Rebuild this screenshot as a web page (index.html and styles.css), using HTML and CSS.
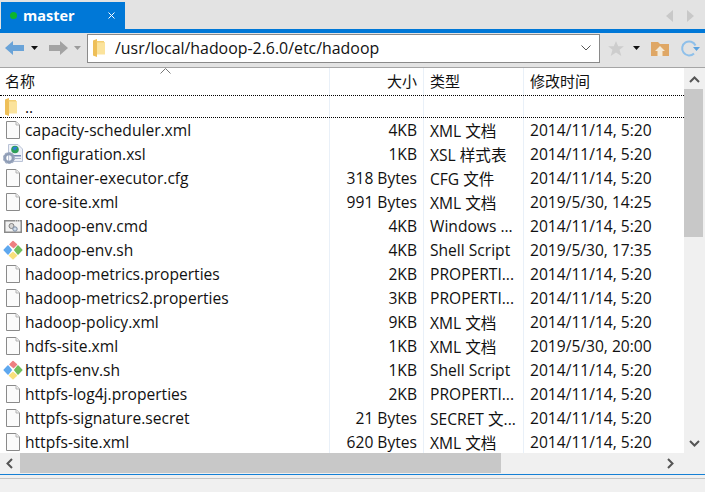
FILE: index.html
```html
<!DOCTYPE html>
<html lang="zh">
<head>
<meta charset="utf-8">
<title>master</title>
<link rel="stylesheet" href="styles.css">
</head>
<body>
<svg class="defs" width="0" height="0">
  <defs>
    <symbol id="doc" viewBox="0 0 16 20"><path d="M1.500 1.500H11L14.500 5V18.500H1.500Z" fill="#fbfbfb" stroke="#8a8a8a"/><path d="M11 1.500V5H14.500" fill="#efefef" stroke="#b5b5b5"/></symbol>
    <symbol id="folder" viewBox="0 0 12 18"><path d="M0 1.500L4 0V2H11V15H4V18L0 16.500Z" fill="#eebf58"/><path d="M4 3H12V15.500H4Z" fill="#fbe39c"/><path d="M3.500 2H11V3.500H3.500Z" fill="#f3cf74"/></symbol>
    <symbol id="git" viewBox="0 0 20 20"><g stroke-width="1.500" stroke-linejoin="round"><path d="M10 1.500L13.500 4.500L10.500 7.500L7 4.500Z" fill="#ee7f80" stroke="#ee7f80"/><path d="M15 6L18.800 10L15 14L11.800 10Z" fill="#72bd5c" stroke="#72bd5c"/><path d="M10 12.500L13.500 15.500L10 18.800L6.500 15.500Z" fill="#f9e07c" stroke="#f9e07c"/><path d="M5 6L8.200 10L5 14L1.200 10Z" fill="#5fa8ee" stroke="#5fa8ee"/></g></symbol>
    <symbol id="xsl" viewBox="0 0 20 20"><path d="M5.500 .5H15L19.500 5V17.500H5.500Z" fill="#eef1f8" stroke="#b9c2d6"/><circle cx="12" cy="5.500" r="3.800" fill="#2e9e58"/><path d="M9.500 5A3 3 0 0 1 14.500 3.500L12 6.500Z" fill="#2d7fd6"/><rect x="10" y="11" width="8" height="1.500" fill="#7b8cb5"/><rect x="10" y="14" width="8" height="1" fill="#a9b4cc"/><circle cx="6" cy="14" r="4.200" fill="none" stroke="#8f9db6" stroke-width="3"/><circle cx="6" cy="14" r="5.500" fill="none" stroke="#a5b1c6" stroke-width="1.200" stroke-dasharray="2 1.500"/></symbol>
    <symbol id="cmd" viewBox="0 0 18 13"><rect x=".75" y=".75" width="16.500" height="11.500" fill="#f1f1f1" stroke="#8a8a8a" stroke-width="1.500"/><path d="M11 1H17" stroke="#f1f1f1" stroke-dasharray="1 1"/><circle cx="7.500" cy="6" r="2.500" fill="#d6d6d6" stroke="#808080"/><circle cx="11" cy="9" r="2.200" fill="#cfdceb" stroke="#7a8aa0"/></symbol>
  </defs>
</svg>
<div class="app">
  <header class="tabbar">
    <div class="tab">
      <span class="dot"></span>
      <span class="tab-title">master</span>
      <svg class="tab-close" width="9" height="9" viewBox="0 0 9 9"><path d="M1.500 1.500L7.500 7.500M7.500 1.500L1.500 7.500" stroke="#fff" fill="none"/></svg>
    </div>
    <div class="tab-nav">
      <svg width="7" height="12" viewBox="0 0 7 12"><path d="M7 0V12L0 6Z" fill="#c8c8c8"/></svg>
      <svg width="7" height="12" viewBox="0 0 7 12"><path d="M0 0V12L7 6Z" fill="#c8c8c8"/></svg>
    </div>
  </header>
  <div class="toolbar">
    <svg class="tool-back" width="20" height="16" viewBox="0 0 20 16"><path d="M0 8L8 1V5H19V11H8V15Z" fill="#69a3d8"/></svg>
    <svg class="caret" width="7" height="4" viewBox="0 0 7 4"><path d="M0 0H7L3.500 4Z" fill="#111"/></svg>
    <svg class="tool-forward" width="20" height="16" viewBox="0 0 20 16"><path d="M20 8L12 1V5H1V11H12V15Z" fill="#a3a3a3"/></svg>
    <svg class="caret" width="7" height="4" viewBox="0 0 7 4"><path d="M0 0H7L3.500 4Z" fill="#9b9b9b"/></svg>
    <div class="address">
      <svg class="addr-folder" width="12" height="18"><use href="#folder"/></svg>
      <span class="addr-text">/usr/local/hadoop-2.6.0/etc/hadoop</span>
      <svg class="addr-chev" width="10" height="6" viewBox="0 0 10 6"><path d="M.5 .5L5 5L9.500 .5" fill="none" stroke="#555"/></svg>
    </div>
    <svg class="tool-star" width="16" height="15" viewBox="0 0 18 17"><path d="M9 0L11.500 6H18L13 10L15 17L9 13L3 17L5 10L0 6H6.500Z" fill="#cdcdcd"/></svg>
    <svg class="caret caret-star" width="7" height="4" viewBox="0 0 7 4"><path d="M0 0H7L3.500 4Z" fill="#111"/></svg>
    <svg class="tool-home" width="18" height="15" viewBox="0 0 18 15"><path d="M0 1H7L9 3H18V15H0Z" fill="#dfa765"/><path d="M9 5L14 10H11.500V15H6.500V10H4Z" fill="#f4ead8"/></svg>
    <svg class="tool-refresh" width="20" height="18" viewBox="0 0 20 18"><path d="M14 14.500A7 7 0 1 1 15.500 6.500" fill="none" stroke="#8fc0ea" stroke-width="2"/><path d="M13 8H20L16.500 12Z" fill="#5ba3e0"/></svg>
  </div>
  <main class="browser">
    <div class="list">
      <div class="row head">
        <div class="name">名称<svg class="sort" width="11" height="6" viewBox="0 0 11 6"><path d="M.5 5.500L5.500 .5L10.500 5.500" fill="none" stroke="#777"/></svg></div>
        <div class="size">大小</div><div class="type">类型</div><div class="date">修改时间</div>
      </div>
      <div class="row parent">
        <div class="name"><svg class="ico-folder" width="12" height="18"><use href="#folder"/></svg><span>..</span></div>
        <div class="size"></div><div class="type"></div><div class="date"></div>
      </div>
      <div class="row"><div class="name"><svg class="ico" width="16" height="20"><use href="#doc"/></svg>capacity-scheduler.xml</div><div class="size">4KB</div><div class="type">XML 文档</div><div class="date">2014/11/14, 5:20</div></div>
      <div class="row"><div class="name"><svg class="ico ico-wide" width="20" height="20"><use href="#xsl"/></svg>configuration.xsl</div><div class="size">1KB</div><div class="type">XSL 样式表</div><div class="date">2014/11/14, 5:20</div></div>
      <div class="row"><div class="name"><svg class="ico" width="16" height="20"><use href="#doc"/></svg>container-executor.cfg</div><div class="size">318 Bytes</div><div class="type">CFG 文件</div><div class="date">2014/11/14, 5:20</div></div>
      <div class="row"><div class="name"><svg class="ico" width="16" height="20"><use href="#doc"/></svg>core-site.xml</div><div class="size">991 Bytes</div><div class="type">XML 文档</div><div class="date">2019/5/30, 14:25</div></div>
      <div class="row"><div class="name"><svg class="ico ico-cmd" width="18" height="13"><use href="#cmd"/></svg>hadoop-env.cmd</div><div class="size">4KB</div><div class="type">Windows ...</div><div class="date">2014/11/14, 5:20</div></div>
      <div class="row"><div class="name"><svg class="ico ico-wide" width="20" height="20"><use href="#git"/></svg>hadoop-env.sh</div><div class="size">4KB</div><div class="type">Shell Script</div><div class="date">2019/5/30, 17:35</div></div>
      <div class="row"><div class="name"><svg class="ico" width="16" height="20"><use href="#doc"/></svg>hadoop-metrics.properties</div><div class="size">2KB</div><div class="type">PROPERTI...</div><div class="date">2014/11/14, 5:20</div></div>
      <div class="row"><div class="name"><svg class="ico" width="16" height="20"><use href="#doc"/></svg>hadoop-metrics2.properties</div><div class="size">3KB</div><div class="type">PROPERTI...</div><div class="date">2014/11/14, 5:20</div></div>
      <div class="row"><div class="name"><svg class="ico" width="16" height="20"><use href="#doc"/></svg>hadoop-policy.xml</div><div class="size">9KB</div><div class="type">XML 文档</div><div class="date">2014/11/14, 5:20</div></div>
      <div class="row"><div class="name"><svg class="ico" width="16" height="20"><use href="#doc"/></svg>hdfs-site.xml</div><div class="size">1KB</div><div class="type">XML 文档</div><div class="date">2019/5/30, 20:00</div></div>
      <div class="row"><div class="name"><svg class="ico ico-wide" width="20" height="20"><use href="#git"/></svg>httpfs-env.sh</div><div class="size">1KB</div><div class="type">Shell Script</div><div class="date">2014/11/14, 5:20</div></div>
      <div class="row"><div class="name"><svg class="ico" width="16" height="20"><use href="#doc"/></svg>httpfs-log4j.properties</div><div class="size">2KB</div><div class="type">PROPERTI...</div><div class="date">2014/11/14, 5:20</div></div>
      <div class="row"><div class="name"><svg class="ico" width="16" height="20"><use href="#doc"/></svg>httpfs-signature.secret</div><div class="size">21 Bytes</div><div class="type">SECRET 文...</div><div class="date">2014/11/14, 5:20</div></div>
      <div class="row"><div class="name"><svg class="ico" width="16" height="20"><use href="#doc"/></svg>httpfs-site.xml</div><div class="size">620 Bytes</div><div class="type">XML 文档</div><div class="date">2014/11/14, 5:20</div></div>
    </div>
    <div class="vscroll">
      <svg width="11" height="7" viewBox="0 0 11 7"><path d="M1 6L5.500 1.500L10 6" fill="none" stroke="#555" stroke-width="2"/></svg>
      <div class="vtrack"><div class="vthumb"></div></div>
      <svg width="11" height="7" viewBox="0 0 11 7"><path d="M1 1L5.500 5.500L10 1" fill="none" stroke="#555" stroke-width="2"/></svg>
    </div>
  </main>
  <div class="hscroll">
    <svg width="7" height="11" viewBox="0 0 7 11"><path d="M6 1L1.500 5.500L6 10" fill="none" stroke="#555" stroke-width="2"/></svg>
    <div class="htrack"><div class="hthumb"></div></div>
    <svg width="7" height="11" viewBox="0 0 7 11"><path d="M1 1L5.500 5.500L1 10" fill="none" stroke="#555" stroke-width="2"/></svg>
  </div>
  <footer class="status"></footer>
</div>
</body>
</html>
```
FILE: styles.css
```css
* { box-sizing: border-box; }
html, body { margin: 0; height: 100%; }
body { width: 705px; height: 492px; overflow: hidden; font-family: "Open Sans", "Noto Sans CJK SC", sans-serif; font-size: 15.600px; color: #111; background: #fff; }
.defs { display: block; height: 0; }
.app { display: flex; flex-direction: column; height: 492px; }
.tabbar { height: 33px; flex: none; display: flex; justify-content: space-between; background: #e3e3e3; border-bottom: 4px solid #0078d7; padding: 2px 11px 0 1px; }
.tab { width: 124px; background: #0078d7; color: #fff; display: flex; align-items: center; padding-left: 9px; }
.dot { width: 7px; height: 7px; border-radius: 50%; background: #0cb62b; margin-right: 6px; }
.tab-title { font-weight: 700; font-size: 14.500px; }
.tab-close { margin-left: auto; margin-right: 9px; }
.tab-nav { display: flex; align-items: center; gap: 14px; }
.toolbar { height: 35px; flex: none; display: flex; align-items: center; background: #e3e3e3; border-bottom: 1px solid #a5a5a5; padding: 0 0 4px 5px; }
.caret { margin-left: 6px; flex: none; }
.tool-forward { margin-left: 10px; flex: none; }
.address { width: 513px; height: 29px; margin-left: 6px; background: #fff; border: 1px solid #8a8a8a; display: flex; align-items: center; padding: 0 8px 0 5px; font-size: 15.900px; }
.addr-folder { flex: none; }
.addr-text { margin-left: 10px; }
.addr-chev { margin-left: auto; }
.tool-star { margin-left: 8px; flex: none; }
.caret-star { margin-left: 9px; }
.tool-home { margin-left: 11px; flex: none; }
.tool-refresh { margin-left: 11px; flex: none; }
.browser { flex: none; height: 385px; display: flex; }
.list { width: 684px; height: 385px; overflow: hidden; background: #fff; }
.row { display: grid; grid-template-columns: 330px 94px 100px 160px; height: 24px; align-items: center; }
.row > div { height: 100%; display: flex; align-items: center; border-right: 1px solid #e9f0f8; white-space: nowrap; overflow: hidden; }
.row > .date { border-right: 0; padding-left: 6px; }
.name { padding-left: 5px; position: relative; }
.size { justify-content: flex-end; padding-right: 6px; }
.type { padding-left: 6px; }
.head { height: 27px; font-size: 15px; }
.head > div { padding-bottom: 3px; }
.parent { height: 23px; border-top: 1px dotted #000; border-bottom: 1px dotted #000; }
.ico { width: 16px; margin-right: 4px; flex: none; }
.ico-wide { width: 20px; margin-left: -2px; margin-right: 2px; }
.ico-cmd { width: 18px; margin-left: -1px; margin-right: 3px; }
.ico-folder { margin-right: 8px; flex: none; }
.sort { position: absolute; left: 160px; top: 0; }
.vscroll { width: 21px; flex: none; background: #f0f0f0; display: flex; flex-direction: column; align-items: center; padding-top: 8px; }
.vtrack { flex: 1; width: 100%; margin-top: 6px; margin-bottom: 6px; }
.vthumb { width: 19px; height: 148px; background: #c8c8c8; }
.vscroll > svg:last-child { margin-bottom: 6px; }
.hscroll { height: 21px; flex: none; display: flex; align-items: center; background: #f0f0f0; padding: 0 31px 0 6px; }
.htrack { flex: 1; height: 21px; margin: 0 0 0 7px; }
.hthumb { width: 481px; height: 20px; background: #c8c8c8; }
.status { height: 18px; flex: none; border-top: 1px solid #1580d5; background: linear-gradient(#f0f0f0 3px, #c4c4c4 3px, #c4c4c4 4px, #f0f0f0 4px); }
```
